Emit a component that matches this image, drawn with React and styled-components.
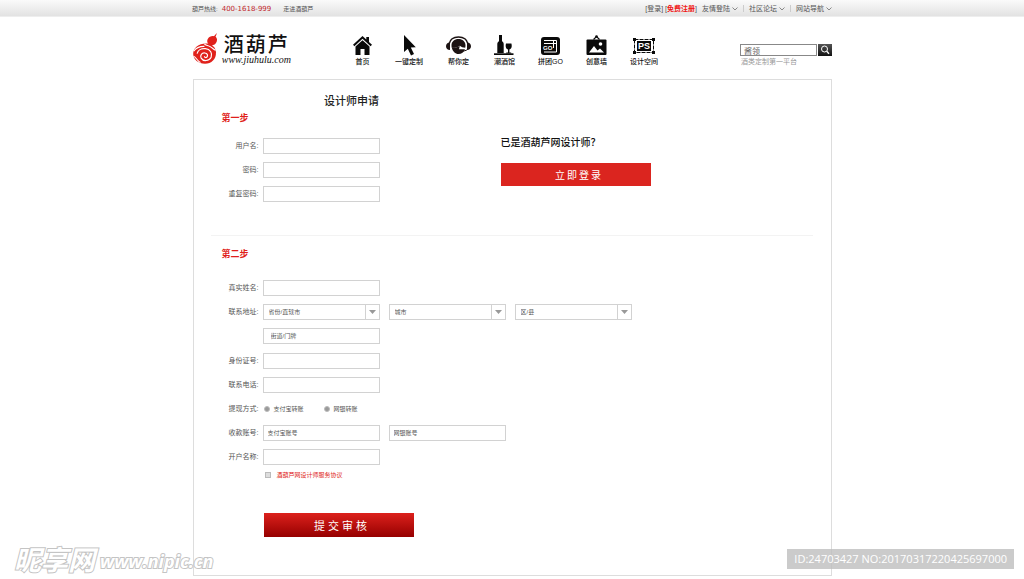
import React, {useState} from "react";
import styled, {createGlobalStyle} from 'styled-components'

const GlobalStyle = createGlobalStyle`
* {
    box-sizing: border-box;
}
body {
    margin: 0;
    background: #fff;
    color: #555;
    font: 7px/10px "Liberation Sans", "Noto Sans CJK SC", sans-serif;
}
button, input, select {
    font-family: inherit;
    border-radius: 0;
    margin: 0;
}
a {
    color: inherit;
    text-decoration: none;
}`;

const Page = styled.div`
position: relative;
min-height: 100vh;
padding-bottom: 3px;`;
const Container = styled.div`
max-width: 640px;
margin: 0 auto;`;

const TopBar = styled.div`
background: linear-gradient(#fafafa, #e2e2e2);
border-bottom: 1px solid #eee;`;
const TopBarInner = styled(Container)`
display: flex;
justify-content: space-between;
align-items: center;
height: 16px;
padding-top: 1px;`;
const TopGroup = styled.div`
display: flex;
align-items: center;
gap: ${props => props.$gap}px;`;
const Hotline = styled.span`
font-size: 6px;
`;
const Phone = styled.strong`
color: #c1272d;
font-size: 7px;
font-weight: normal;
font-family: "DejaVu Sans", sans-serif;
margin-left: 4px;`;
const RegisterLink = styled.a`
color: #f01414;
font-weight: bold;`;
const MenuButton = styled.button`
display: flex;
align-items: center;
gap: 2px;
padding: 0;
border: 0;
background: none;
color: #555;
font-size: 7px;
line-height: 10px;`;
const Separator = styled.span`
width: 1px;
height: 7px;
background: #ccc;`;

const Header = styled(Container)`
display: flex;
align-items: flex-start;
height: 62px;
padding: 14px 0 0 1px;`;
const Logo = styled.a`
display: flex;
gap: 5px;
width: 98px;
color: #111;`;
const LogoText = styled.span`
display: flex;
flex-direction: column;
padding-top: 4px;
white-space: nowrap;`;
const LogoName = styled.span`
font-size: 20px;
line-height: 20px;
font-weight: 500;
letter-spacing: 2px;
margin-left: 1px;`;
const LogoUrl = styled.span`
font: italic 10px/10px "Liberation Serif", serif;
margin-left: -1px;`;

const Nav = styled.nav`
display: flex;
gap: 23px;
margin-left: 62px;
padding-top: 4px;`;
const NavItem = styled.a`
display: flex;
flex-direction: column;
align-items: center;
gap: 1px;
color: #111;
font-weight: 500;
white-space: nowrap;

svg {
    display: block;
    height: 21px;
}`;

const SearchForm = styled.form`
width: 92px;
margin-left: auto;
padding-top: 13px;`;
const SearchRow = styled.div`
display: flex;
gap: 1px;`;
const SearchInput = styled.input`
flex: 1;
min-width: 0;
height: 12px;
padding: 0 3px;
border: 1px solid #888;
color: #666;
font-size: 8px;
outline: none;`;
const SearchButton = styled.button`
display: flex;
align-items: center;
justify-content: center;
width: 14px;
height: 12px;
padding: 0;
border: 0;
background: linear-gradient(#555, #111);`;
const SearchHint = styled.p`
margin: 0;
padding: 1px 1px 0;
color: #999;`;

const Panel = styled(Container)`
max-width: 639px;
padding: 15px 18px 38px 17px;
border: 1px solid #ddd;`;
const Title = styled.h1`
width: 282px;
margin: 0;
text-align: center;
font-size: 11px;
line-height: 12px;
font-weight: 500;
color: #222;`;
const StepTitle = styled.h2`
margin: 0;
padding-left: 11px;
color: #e01f1c;
font-size: 9px;
line-height: 12px;`;
const StepOne = styled.section`
display: flex;
flex-wrap: wrap;
padding: 5px 0 29px;
border-bottom: 1px solid #f3f3f3;`;
const StepTwo = styled.section`
padding-top: 12px;`;
const FirstColumn = styled.div`
width: 290px;`;
const LoginColumn = styled.div`
width: 150px;
padding-top: 24px;`;
const LoginTitle = styled.h3`
margin: 0 0 13px;
color: #111;
font-size: 10px;
line-height: 14px;
font-weight: 500;`;
const Rows = styled.div`
padding-top: ${props => props.$top}px;`;
const Row = styled.div`
display: flex;
align-items: center;
height: 24px;`;
const Label = styled.label`
width: 48px;
margin-right: 4px;
text-align: right;
white-space: nowrap;`;
const Fields = styled.div`
display: flex;
gap: 9px;`;
const Input = styled.input`
width: 117px;
height: 16px;
padding: 0 ${props => props.$pad || 4}px;
border: 1px solid #d2d2d2;
background: #fff;
color: #555;
font-size: 6px;
outline: none;

&::placeholder {
    color: #555;
    opacity: 1;
}`;
const SelectBox = styled.div`
display: grid;
grid-template-columns: 1fr 14px;
width: 117px;
height: 16px;
border: 1px solid #d2d2d2;`;
const Select = styled.select`
grid-area: 1 / 1 / 2 / 3;
min-width: 0;
padding: 0 5px;
appearance: none;
border: 0;
background: none;
color: #555;
font-size: 6px;
outline: none;`;
const SelectArrow = styled.span`
grid-area: 1 / 2;
display: flex;
align-items: center;
justify-content: center;
border-left: 1px solid #d2d2d2;
pointer-events: none;`;
const Choice = styled.label`
display: flex;
align-items: center;
gap: ${props => props.$gap}px;
width: ${props => props.$wide ? "auto" : "51px"};
font-size: 6px;
color: ${props => props.$red ? "#e01f1c" : "#555"};`;
const Radio = styled.input.attrs({type: "radio"})`
width: 6px;
height: 6px;
appearance: none;
border: 1px solid #bbb;
border-radius: 50%;
background: #999;

&:checked {
    background: #333;
}`;
const Checkbox = styled.input.attrs({type: "checkbox"})`
width: 6px;
height: 6px;
appearance: none;
border: 1px solid #bbb;
background: #ddd;

&:checked {
    background: #777;
}`;
const PaymentChoices = styled(Fields)`
padding-left: 1px;`;
const AgreeRow = styled.div`
display: flex;
padding: 1px 0 0 54px;`;
const RedButton = styled.button`
width: 150px;
height: ${props => props.$submit ? 24 : 23}px;
padding: 0 0 0 7px;
border: 0;
color: #fff;
background: ${props => props.$submit ? "linear-gradient(#dc211c, #960000)" : "#db251f"};
font-size: ${props => props.$submit ? 11 : 10}px;
letter-spacing: ${props => props.$submit ? 3 : 2}px;`;
const SubmitRow = styled.div`
padding: 33px 0 0 53px;`;

const Watermark = styled.div`
position: absolute;
left: 14px;
bottom: 4px;
display: flex;
align-items: center;
gap: 5px;
color: #fff;
font-style: italic;
font-weight: bold;
-webkit-text-stroke: 2px #c4c4c4;
paint-order: stroke fill;
pointer-events: none;`;
const WatermarkName = styled.span`
font-size: 27px;
line-height: 28px;`;
const WatermarkUrl = styled.span`
font-family: "Open Sans", sans-serif;
font-size: 18px;
line-height: 28px;`;
const IdBadge = styled.div`
position: absolute;
right: 10px;
bottom: 10px;
padding: 0 7px;
background: rgba(190, 190, 190, 0.8);
color: #fff;
font: 11px/20px "Open Sans", sans-serif;
white-space: nowrap;
pointer-events: none;`;

const GourdIcon = () => (
    <svg width="27" height="35" viewBox="0 0 27 35" fill="none">
        <path d="M26 .5c-.3 1.600-.7 2.700-1.400 3.900 2 1.800 2.200 4.800.5 7.200-1.500 2.200-4.200 3-6.700 2-2.800-1.200-3.600-4.400-2.100-6.800 1.300-2.200 4-3.400 6.600-2.800.9-.9 1.800-2.200 3.100-3.500z" fill="#e0211b"/>
        <path d="M17.500 12.400c3.800 1 7.300 4.300 7.600 9.500.3 7-5 12.300-12 12.300C5.800 34.200.3 29.500.2 23.600.1 16.300 7.500 11 17.500 12.400z" fill="#e0211b"/>
        <path d="M4.500 23c.8-3.500 4.500-5.800 9-5.300 5.500.5 8 5.300 6.300 9.300-2.200 4.500-8.800 4.800-10.900 1-1.500-3.200.7-6 4.100-5.600 2.700.3 3.600 2.900 2.200 4.400-1 1-2.700.6-2.700-.8" stroke="#fff" strokeWidth="1.300"/>
        <path d="M.5 26c3.300 1 3.600 5 7.700 6.700M.8 20.500c2.500-3.500 6.700-5.500 11.700-5.300M12.500 12.500c1 1.500 4 1.500 6.500 3 2.200 1.200 3.500 3.500 5.800 3.800" stroke="#fff" strokeWidth="1.200"/>
    </svg>
)

const HomeIcon = () => (
    <svg width="19" height="21" viewBox="0 0 19 21">
        <path d="M9.500 1L0 9.700l1.400 1.500 8.100-7.400 8.100 7.400L19 9.700l-3-2.800V2h-2.700v2.500z" fill="#0a0a0a"/>
        <path d="M9.500 5.200L2.500 11.500V20H7.500V14h4v6h5v-8.500z" fill="#0a0a0a"/>
    </svg>
)

const CursorIcon = () => (
    <svg width="28" height="21" viewBox="0 0 28 21">
        <path d="M9 0v17l3.800-3.300L16 20.500l3-1.400-3.200-6.500 5-.4z" fill="#0a0a0a"/>
    </svg>
)

const HeadsetIcon = () => (
    <svg width="25" height="21" viewBox="0 0 25 21">
        <path d="M3 9C4 4.500 7.500 2 12.500 2S21 4.500 22 9" fill="none" stroke="#1c1313" strokeWidth="1.400"/>
        <path d="M4 7.500v7.500C1.500 15 0 13.500 0 11.300s1.500-3.800 4-3.800zM21 7.500v7.500c2.500 0 4-1.500 4-3.700s-1.500-3.800-4-3.800z" fill="#1c1313"/>
        <path d="M5.500 10.500C5.500 6.500 8.500 4 12.500 4s7 2.500 7 6.500c0 .7-.1 1.500-.3 2.200-2.200-.2-4-.8-5.400-2-2 1.500-4.700 2.200-8 2.100-.2-.7-.3-1.500-.3-2.300z" fill="#1c1313"/>
        <path d="M5.800 12.500c3.200.3 5.700-.3 8-1.600l-.8 3.300h6c-1 3-3.500 4.800-6.500 4.800-3.200 0-5.900-2.400-6.700-6.500z" fill="#1c1313"/>
        <path d="M21.500 14.500c-1.500 1.200-3.500 1.600-6.500 1.500" fill="none" stroke="#1c1313"/>
    </svg>
)

const WineIcon = () => (
    <svg width="21" height="21" viewBox="0 0 21 21" fill="#0a0a0a">
        <path d="M5 0h3v6.200c1.200.8 1.700 1.600 1.700 3V18H3.300V9.200c0-1.400.5-2.200 1.700-3z"/>
        <path d="M12 8.500h5.400c.8 3 .2 5.500-2 6v3h1.800v1h-5v-1H14v-3c-2.200-.5-2.800-3-2-6z"/>
        <path d="M0 18.300h19.500V20H0z"/>
    </svg>
)

const GoIcon = () => (
    <svg width="21" height="21" viewBox="0 0 21 21">
        <rect x="1" y="2" width="19" height="18" rx="3" fill="#0a0a0a"/>
        <path d="M4 5.500h12.500v11.500H4M4 8.500h12M13.500 6v7" fill="none" stroke="#fff"/>
        <text x="3" y="15" fill="#fff" fontSize="6" fontWeight="bold" fontFamily="Liberation Sans, sans-serif">GO</text>
    </svg>
)

const PictureIcon = () => (
    <svg width="21" height="21" viewBox="0 0 21 21">
        <path d="M7.500 4.500l3-3 3 3" fill="none" stroke="#0a0a0a" strokeWidth="1.200"/>
        <circle cx="10.500" cy="1.500" r="1.300" fill="#0a0a0a"/>
        <rect x="0.500" y="4.500" width="20" height="15.500" rx="1" fill="#0a0a0a"/>
        <path d="M3 17.500l5-6.500 3.500 4.500 2.500-2 4 4z" fill="#fff"/>
        <circle cx="14.500" cy="9" r="1.800" fill="#fff"/>
    </svg>
)

const DesignIcon = () => (
    <svg width="28" height="21" viewBox="0 0 28 21">
        <rect x="4.500" y="4.500" width="19" height="13" fill="none" stroke="#0a0a0a" strokeDasharray="4 1"/>
        <path d="M3 3h3v3H3zM22 3h3v3h-3zM3 16h3v3H3zM22 16h3v3h-3z" fill="#0a0a0a"/>
        <rect x="7" y="6" width="14" height="10" fill="#0a0a0a"/>
        <text x="14" y="14" textAnchor="middle" fill="#fff" fontSize="9" fontWeight="bold" fontFamily="Liberation Sans, sans-serif">PS</text>
    </svg>
)

const ChevronIcon = () => (
    <svg width="6" height="4" viewBox="0 0 6 4" fill="none" stroke="#888">
        <path d="M.5.5L3 3 5.500.5"/>
    </svg>
)

const SearchIcon = () => (
    <svg width="10" height="10" viewBox="0 0 10 10" fill="none" stroke="#fff">
        <circle cx="4.500" cy="4" r="3"/>
        <path d="M6.700 6.200L9 8.800" strokeWidth="1.300"/>
    </svg>
)

const navItems = [
    {name: "首页", Icon: HomeIcon},
    {name: "一键定制", Icon: CursorIcon},
    {name: "帮你定", Icon: HeadsetIcon},
    {name: "潮酒馆", Icon: WineIcon},
    {name: "拼团GO", Icon: GoIcon},
    {name: "创意墙", Icon: PictureIcon},
    {name: "设计空间", Icon: DesignIcon},
]

const TextRow = ({id, label, type = "text"}) => (
    <Row>
        <Label htmlFor={id}>{label}:</Label>
        <Input id={id} type={type}/>
    </Row>
)

const AreaSelect = ({id, label}) => (
    <SelectBox>
        <Select id={id} aria-label={label}>
            <option>{label}</option>
        </Select>
        <SelectArrow>
            <svg width="7" height="4" viewBox="0 0 7 4"><path d="M0 0h7L3.500 4z" fill="#999"/></svg>
        </SelectArrow>
    </SelectBox>
)

const App = () => {
    const [keyword, setKeyword] = useState("酱领")
    const [payment, setPayment] = useState("")
    const [agreed, setAgreed] = useState(false)

    return (
        <Page>
            <GlobalStyle/>
            <TopBar>
                <TopBarInner>
                    <TopGroup $gap={12}>
                        <Hotline>葫芦热线:<Phone>400-1618-999</Phone></Hotline>
                        <Hotline as="a" href="#about">走进酒葫芦</Hotline>
                    </TopGroup>
                    <TopGroup $gap={5}>
                        <span>
                            [<a href="#login">登录</a>] [<RegisterLink href="#register">免费注册</RegisterLink>]
                        </span>
                        <MenuButton type="button">友情登陆 <ChevronIcon/></MenuButton>
                        <Separator/>
                        <MenuButton type="button">社区论坛 <ChevronIcon/></MenuButton>
                        <Separator/>
                        <MenuButton type="button">网站导航 <ChevronIcon/></MenuButton>
                    </TopGroup>
                </TopBarInner>
            </TopBar>

            <Header as="header">
                <Logo href="#home">
                    <GourdIcon/>
                    <LogoText>
                        <LogoName>酒葫芦</LogoName>
                        <LogoUrl>www.jiuhulu.com</LogoUrl>
                    </LogoText>
                </Logo>
                <Nav>
                    {navItems.map(({name, Icon}) => (
                        <NavItem href="#nav" key={name}>
                            <Icon/>
                            {name}
                        </NavItem>
                    ))}
                </Nav>
                <SearchForm onSubmit={e => e.preventDefault()}>
                    <SearchRow>
                        <SearchInput
                            aria-label="搜索"
                            value={keyword}
                            onChange={e => setKeyword(e.target.value)}
                        />
                        <SearchButton aria-label="搜索"><SearchIcon/></SearchButton>
                    </SearchRow>
                    <SearchHint>酒类定制第一平台</SearchHint>
                </SearchForm>
            </Header>

            <Panel as="main">
                <Title>设计师申请</Title>
                <StepOne>
                    <FirstColumn>
                        <StepTitle>第一步</StepTitle>
                        <Rows $top={10}>
                            <TextRow id="user" label="用户名"/>
                            <TextRow id="password" label="密码" type="password"/>
                            <TextRow id="repeat" label="重复密码" type="password"/>
                        </Rows>
                    </FirstColumn>
                    <LoginColumn>
                        <LoginTitle>已是酒葫芦网设计师？</LoginTitle>
                        <RedButton type="button">立即登录</RedButton>
                    </LoginColumn>
                </StepOne>

                <StepTwo>
                    <StepTitle>第二步</StepTitle>
                    <Rows $top={16}>
                        <TextRow id="realname" label="真实姓名"/>
                        <Row>
                            <Label htmlFor="province">联系地址:</Label>
                            <Fields>
                                <AreaSelect id="province" label="省份/直辖市"/>
                                <AreaSelect id="city" label="城市"/>
                                <AreaSelect id="district" label="区/县"/>
                            </Fields>
                        </Row>
                        <Row>
                            <Label htmlFor="street"/>
                            <Input id="street" aria-label="街道/门牌" placeholder="街道/门牌" $pad={7}/>
                        </Row>
                    </Rows>
                    <Rows $top={1}>
                        <TextRow id="idcard" label="身份证号"/>
                        <TextRow id="phone" label="联系电话" type="tel"/>
                        <Row>
                            <Label as="span">提现方式:</Label>
                            <PaymentChoices>
                                <Choice $gap={4}>
                                    <Radio
                                        name="payment"
                                        checked={payment === "alipay"}
                                        onChange={() => setPayment("alipay")}
                                    />
                                    支付宝转账
                                </Choice>
                                <Choice $gap={4}>
                                    <Radio
                                        name="payment"
                                        checked={payment === "bank"}
                                        onChange={() => setPayment("bank")}
                                    />
                                    网银转账
                                </Choice>
                            </PaymentChoices>
                        </Row>
                        <Row>
                            <Label htmlFor="alipay">收款账号:</Label>
                            <Fields>
                                <Input id="alipay" placeholder="支付宝账号"/>
                                <Input aria-label="网银账号" placeholder="网银账号"/>
                            </Fields>
                        </Row>
                        <TextRow id="account" label="开户名称"/>
                    </Rows>
                    <AgreeRow>
                        <Choice $gap={6} $wide $red>
                            <Checkbox checked={agreed} onChange={e => setAgreed(e.target.checked)}/>
                            酒葫芦网设计师服务协议
                        </Choice>
                    </AgreeRow>
                    <SubmitRow>
                        <RedButton type="button" $submit>提交审核</RedButton>
                    </SubmitRow>
                </StepTwo>
            </Panel>

            <Watermark>
                <WatermarkName>昵享网</WatermarkName>
                <WatermarkUrl>www.nipic.cn</WatermarkUrl>
            </Watermark>
            <IdBadge>ID:24703427 NO:20170317220425697000</IdBadge>
        </Page>
    )
}

export default App
